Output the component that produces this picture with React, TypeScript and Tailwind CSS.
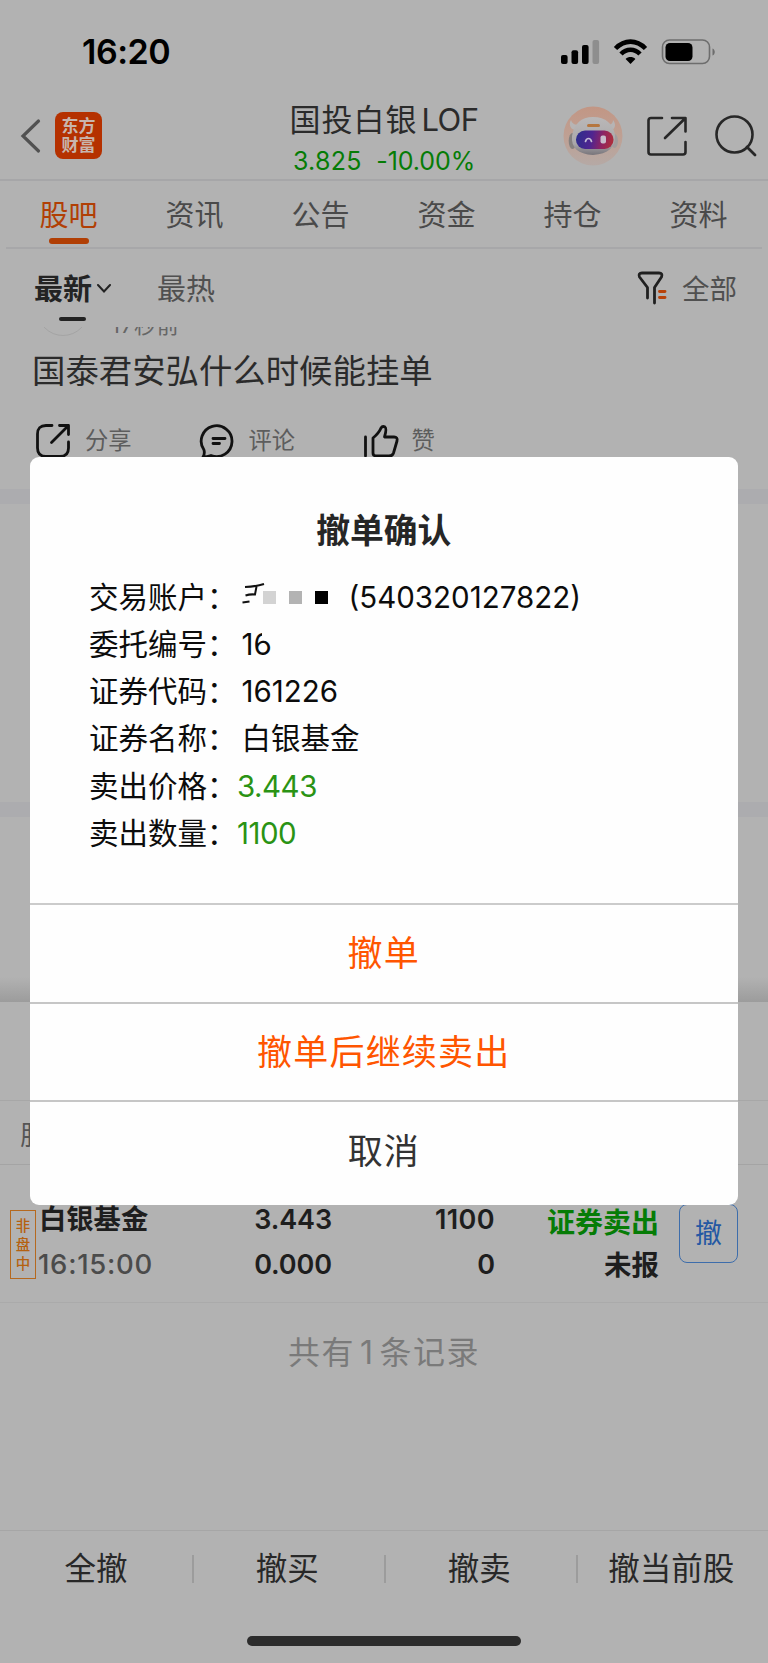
import React from "react";

const tabs = ["股吧", "资讯", "公告", "资金", "持仓", "资料"];

const details = [
  { label: "委托编号", value: "16", masked: true },
  { label: "证券代码", value: "161226" },
  { label: "证券名称", value: "白银基金" },
  { label: "卖出价格", value: "3.443", green: true },
  { label: "卖出数量", value: "1100", green: true },
];

function StatusBar() {
  return (
    <div className="flex h-[102px] items-center justify-between pt-px pl-[82px] pr-[51px]">
      <span className="text-[34px] leading-[40px] font-semibold tracking-[-0.500px] text-black">16:20</span>
      <svg width="156" height="30" viewBox="0 0 156 30">
        <g fill="#000">
          <rect x="0" y="18" width="6.6" height="9" rx="2" />
          <rect x="10.5" y="13.3" width="6.6" height="13.7" rx="2" />
          <rect x="21" y="8" width="6.6" height="19" rx="2" />
          <rect x="31.5" y="3" width="6.6" height="24" rx="2" fill="#8e8e8e" />
        </g>
        <g fill="none" stroke="#000" strokeWidth="4.6">
          <path d="M54.500 11.500C63.500 2.300 75.500 2.300 84.500 11.500" />
          <path d="M60 17C65.500 11.400 73.500 11.400 79 17" />
        </g>
        <path d="M69.500 27L64.600 21.900C67.300 19.300 71.700 19.300 74.400 21.900Z" />
        <rect x="101.500" y="3" width="47" height="23.500" rx="7" fill="none" stroke="#6d6d6d" strokeWidth="1.600" />
        <rect x="104.500" y="6" width="27" height="18" rx="4.500" />
        <path d="M151.500 11.500C154.500 12.500 154.500 17.500 151.500 18.500Z" fill="#6d6d6d" />
      </svg>
    </div>
  );
}

function Robot() {
  return (
    <svg width="60" height="60" viewBox="0 0 60 60">
      <defs>
        <linearGradient id="halo" x1="0" y1="0" x2="0" y2="1">
          <stop offset="0" stopColor="#c29684" />
          <stop offset="0.55" stopColor="#bea195" />
          <stop offset="1" stopColor="#b5a9a5" />
        </linearGradient>
        <linearGradient id="visor" x1="0" y1="0" x2="1" y2="0.1">
          <stop offset="0" stopColor="#2b2f8c" />
          <stop offset="0.45" stopColor="#4f2590" />
          <stop offset="0.75" stopColor="#8f2462" />
          <stop offset="1" stopColor="#ab2d3f" />
        </linearGradient>
        <linearGradient id="shell" x1="0" y1="0" x2="0" y2="1">
          <stop offset="0" stopColor="#bab8b8" />
          <stop offset="0.7" stopColor="#aaa8aa" />
          <stop offset="1" stopColor="#77747a" />
        </linearGradient>
      </defs>
      <circle cx="30" cy="30" r="29.500" fill="url(#halo)" />
      <path d="M8 14C5 19 8 25 15 24L18 18C13 20 9 18 8 14ZM50 14C54 19 52 25 45 24L42 18C47 20 50 18 50 14Z" fill="#b7b4b4" />
      <ellipse cx="9.500" cy="35" rx="3.800" ry="8" fill="#85817f" />
      <ellipse cx="51.500" cy="35" rx="3.500" ry="7" fill="#a29d9d" />
      <path d="M30 11C43 11 50 18 52 29C53 41 45 48 30 49C15 48 8 42 9 30C11 18 18 11 30 11Z" fill="url(#shell)" />
      <rect x="24" y="18" width="13" height="3" rx="1.500" fill="#b5763f" />
      <rect x="13" y="24.500" width="37.500" height="18.500" rx="9" fill="url(#visor)" />
      <path d="M22.500 35.500C23.500 31.500 27.500 31.500 28.500 35.500" fill="none" stroke="#c3bcd5" strokeWidth="1.700" strokeLinecap="round" />
      <rect x="37.500" y="29.500" width="5.500" height="8" rx="2" fill="#c8bccb" />
    </svg>
  );
}

function Header() {
  return (
    <div className="flex h-[79px] items-start border-b-2 border-[#a6a6a8]">
      <svg className="mt-[16px] ml-[20px]" width="22" height="36" viewBox="0 0 22 36">
        <path d="M18.500 3L3 18L18.500 33" fill="none" stroke="#515151" strokeWidth="3.200" strokeLinecap="round" />
      </svg>
      <div className="mt-[10px] ml-[13px] flex h-[47px] w-[47px] flex-col items-center justify-center rounded-[8px] bg-[#b53100] text-[17px] leading-[19px] font-bold text-[#c8b5ad]">
        <span>东方</span>
        <span>财富</span>
      </div>
      <div className="ml-[182px] flex w-[200px] flex-col items-center">
        <div className="flex items-center text-[31px] leading-[36px] whitespace-nowrap text-[#2b2b2b]">
          <span className="tracking-[1px]">国投白银</span>
          <span className="ml-[4px] tracking-[-0.600px]">LOF</span>
        </div>
        <div className="mt-[8px] flex gap-[14.500px] text-[25px] leading-[30px] tracking-[0.300px] whitespace-nowrap text-[#067c06]">
          <span>3.825</span>
          <span className="tracking-[-0.100px]">-10.00%</span>
        </div>
      </div>
      <div className="mt-[4px] ml-[79px]">
        <Robot />
      </div>
      <svg className="mt-[13px] ml-[22px]" width="44" height="44" viewBox="0 0 44 44">
        <path d="M17 3H6Q3.500 3 3.500 5.500V37Q3.500 39.500 6 39.500H38Q40.500 39.500 40.500 37V27M27 3H40.500V16.500M40 3.500L20 23" fill="none" stroke="#272727" strokeWidth="2.600" strokeLinecap="round" strokeLinejoin="round" />
      </svg>
      <svg className="mt-[12px] ml-[25px] shrink-0" width="44" height="44" viewBox="0 0 44 44">
        <circle cx="20.500" cy="20.500" r="18" fill="none" stroke="#272727" strokeWidth="2.600" />
        <path d="M33 33L41 41" stroke="#272727" strokeWidth="2.800" strokeLinecap="round" />
      </svg>
    </div>
  );
}

function Tabs() {
  return (
    <div className="mx-[6px] flex h-[68px] border-b-2 border-[#a7a7a9]">
      {tabs.map((tab, i) => (
        <div key={tab} className="flex w-[126px] flex-col items-center pt-[14px]">
          <span className={i === 0 ? "-ml-[1px] text-[29px] leading-[42px] text-[#b13f05]" : "-ml-[1px] text-[29px] leading-[42px] text-[#4a4a4a]"}>{tab}</span>
          {i === 0 && <span className="mt-[1px] h-[6px] w-[40px] rounded-full bg-[#b13f05]" />}
        </div>
      ))}
    </div>
  );
}

function Filters() {
  return (
    <div className="flex h-[78px] items-start pt-[21px] pl-[34px]">
      <div className="flex w-[78px] flex-col">
        <div className="flex items-center">
          <span className="text-[29px] leading-[40px] font-bold text-[#232323]">最新</span>
          <svg className="ml-[4px]" width="16" height="12" viewBox="0 0 16 12">
            <path d="M2 1L8 7.500L14 1" fill="none" stroke="#232323" strokeWidth="2" strokeLinecap="round" />
          </svg>
        </div>
        <span className="mt-[7px] ml-[25px] h-[4px] w-[27px] rounded-full bg-[#232323]" />
      </div>
      <span className="ml-[45px] text-[29px] leading-[40px] text-[#505050]">最热</span>
      <svg className="ml-[422px]" width="32" height="36" viewBox="0 0 32 36">
        <path d="M10.500 28V17.500L2.500 7Q1 3 5 3H22Q26 3 24.500 7L17.500 17.500V33" fill="none" stroke="#202020" strokeWidth="2.800" strokeLinecap="round" strokeLinejoin="round" />
        <path d="M22.500 21.500H28M22.500 27.500H28" stroke="#b8420a" strokeWidth="2.900" strokeLinecap="round" />
      </svg>
      <span className="ml-[13px] text-[27.500px] leading-[38px] text-[#505050]">全部</span>
    </div>
  );
}

function Post() {
  return (
    <div className="h-[162px]">
      <div className="flex h-[9px] items-end overflow-hidden">
        <span className="ml-[37px] h-[52px] w-[52px] rounded-full border border-[#a4a4a4]" />
        <span className="ml-[22px] text-[22px] leading-[22px] tracking-[0.800px] text-[#666666]">17秒前</span>
      </div>
      <div className="mt-[13px] pl-[32px] text-[33.400px] leading-[44px] text-[#2b2b2b]">国泰君安弘什么时候能挂单</div>
      <div className="mt-[30px] flex h-[36px] pl-[35px] text-[23.300px] leading-[36px] text-[#5d5d5d]">
        <div className="flex w-[163.500px]">
          <svg width="37" height="36" viewBox="0 0 37 36">
            <path d="M17 2.500H11Q2.500 2.500 2.500 11V25Q2.500 33.500 11 33.500H25Q33.500 33.500 33.500 25V19M24.500 2.500H33.500V11.500M33 3L16.500 19.500" fill="none" stroke="#111" strokeWidth="2.800" strokeLinecap="round" strokeLinejoin="round" />
          </svg>
          <span className="ml-[13px]">分享</span>
        </div>
        <div className="flex w-[163px]">
          <svg width="38" height="36" viewBox="0 0 38 36">
            <path d="M5 27A15.400 15.400 0 1 1 12 32.500Q8 34 4 34Q6 31 5 27ZM14 15.500H26M14 20.500H20.500" fill="none" stroke="#111" strokeWidth="2.800" strokeLinecap="round" strokeLinejoin="round" />
          </svg>
          <span className="ml-[12px]">评论</span>
        </div>
        <div className="flex">
          <svg width="38" height="36" viewBox="0 0 38 36">
            <path d="M3.500 14V33M11 15Q17 10 19 5Q20.500 2.500 23 4Q25 5.500 22.500 14H32Q36 14 35 18L31.500 30Q30.500 33 27 33H14Q11 33 11 30Z" fill="none" stroke="#111" strokeWidth="2.800" strokeLinecap="round" strokeLinejoin="round" />
          </svg>
          <span className="ml-[12px]">赞</span>
        </div>
      </div>
    </div>
  );
}

function Orders() {
  return (
    <div>
      <div className="h-[99px] border-b border-[#a7a7a7]" />
      <div className="h-[64px] border-b border-[#a4a4a4] pl-[20px] text-[27px] leading-[70px] text-[#555]">股</div>
      <div className="flex h-[138px] border-b border-[#aaaaaa] pt-[39px] text-[27px] font-semibold text-[#1e1e1e]">
        <div className="mt-[6px] ml-[10px] flex h-[69px] w-[26px] flex-col items-center justify-center border-[1.500px] border-[#b5691f] text-[14.500px] leading-[19px] font-medium text-[#b5610f]">
          <span>非</span>
          <span>盘</span>
          <span>中</span>
        </div>
        <div className="ml-[3px] flex w-[150px] flex-col leading-[32px]">
          <span className="text-[27.300px] font-bold">白银基金</span>
          <span className="mt-[12px] -ml-px text-[27.500px] font-medium tracking-[0.700px] text-[#4b4b4b]">16:15:00</span>
        </div>
        <div className="flex w-[143px] flex-col items-end leading-[32px]">
          <span className="tracking-[-0.100px]">3.443</span>
          <span className="mt-[13px] tracking-[-0.100px]">0.000</span>
        </div>
        <div className="flex w-[163px] flex-col items-end leading-[32px]">
          <span className="tracking-[0.400px]">1100</span>
          <span className="mt-[13px]">0</span>
        </div>
        <div className="flex w-[164px] flex-col items-end leading-[32px] font-bold">
          <span className="mt-[3px] text-[28px] text-[#067c06]">证券卖出</span>
          <span className="mt-[10px] text-[27.500px]">未报</span>
        </div>
        <div className="ml-[20px] flex h-[59px] w-[59px] items-center justify-center rounded-[8px] border-[1.500px] border-[#3d6dab] pt-[2px] text-[27px] font-normal text-[#2458a3]">撤</div>
      </div>
      <div className="flex justify-center gap-[5px] pt-[29px] text-[32px] leading-[42px] tracking-[1.500px] text-[#7a7a7a]">
        <span>共有</span>
        <span>1</span>
        <span>条记录</span>
      </div>
    </div>
  );
}

function Footer() {
  return (
    <div className="flex h-[133px] flex-col border-t border-[#a6a6a6]">
      <div className="flex pt-[18px] text-[31.500px] leading-[40px] text-[#282828]">
        {["全撤", "撤买", "撤卖", "撤当前股"].map((name, i) => (
          <div key={name} className="flex w-[192px] items-center">
            {i > 0 && <span className="h-[28px] w-[1.500px] bg-[#9c9c9c]" />}
            <span className={i > 0 ? "flex-1 pr-[3px] text-center whitespace-nowrap" : "flex-1 text-center whitespace-nowrap"}>{name}</span>
          </div>
        ))}
      </div>
      <div className="mx-auto mt-[47px] h-[10px] w-[274px] rounded-full bg-[#2c2c2c]" />
    </div>
  );
}

function Label({ text, wide }: { text: string; wide: boolean }) {
  return (
    <span className={wide ? "flex w-[152.500px]" : "flex w-[148px]"}>
      <span>{text}</span>
      <span>：</span>
    </span>
  );
}

function Modal() {
  return (
    <div className="absolute top-[457px] left-[29.500px] flex h-[748px] w-[708.500px] flex-col rounded-[9px] bg-[#fefefe]">
      <div className="h-[448px] border-b-2 border-[#cbcbcb] pt-[52px]">
        <div className="text-center text-[33.800px] leading-[44px] font-bold text-[#262626]">撤单确认</div>
        <div className="mt-[20.500px] pl-[59.500px] text-[29.500px] leading-[47.300px] text-[#0c0c0c]">
          <div className="flex h-[47.300px] items-center">
            <Label text="交易账户" wide />
            <svg width="100" height="32" viewBox="0 0 100 32">
              <path d="M3 6Q14 5.500 22 3M3.500 14.500Q8 13 13 13.500L14.500 5.500M0.500 21.500L7.500 20.500" fill="none" stroke="#111" strokeWidth="2" />
              <rect x="21" y="10" width="13" height="13" fill="#d3d3d3" />
              <rect x="47" y="10" width="13" height="13" fill="#b3b3b3" />
              <rect x="73" y="10" width="13" height="13" fill="#000" />
            </svg>
            <span className="ml-[7px]">(540320127822)</span>
          </div>
          {details.map((d) => (
            <div key={d.label} className="flex h-[47.300px]">
              <Label text={d.label} wide={!d.green} />
              <span className={d.green ? "relative tracking-[-0.500px] text-[#2a9314]" : "relative"}>
                {d.value}
                {d.masked && <span className="absolute top-0 left-[20px] h-[18px] w-[14px] bg-[#fefefe]" />}
              </span>
            </div>
          ))}
        </div>
      </div>
      <button className="h-[98.500px] border-b-2 border-[#c6c6c6] text-[35px] tracking-[1.200px] text-[#ff5500]">撤单</button>
      <button className="h-[98.500px] border-b-2 border-[#c6c6c6] text-[35px] tracking-[1.200px] text-[#ff5500]">撤单后继续卖出</button>
      <button className="h-[98px] text-[35px] tracking-[1px] text-[#333]">取消</button>
    </div>
  );
}

export default function App() {
  return (
    <div className="relative flex h-[1663px] w-[768px] flex-col overflow-hidden bg-[#b2b2b2] font-['Inter','Noto_Sans_CJK_SC',sans-serif]">
      <StatusBar />
      <Header />
      <Tabs />
      <Filters />
      <Post />
      <div className="h-[15px] bg-[#acacaf]" />
      <div className="h-[298px]" />
      <div className="h-[15px] bg-[#acacaf]" />
      <div className="h-[160px]" />
      <div className="h-[25px] bg-linear-to-b from-[#b2b2b2] to-[#9c9c9c]" />
      <Orders />
      <div className="flex-1" />
      <Footer />
      <Modal />
    </div>
  );
}
